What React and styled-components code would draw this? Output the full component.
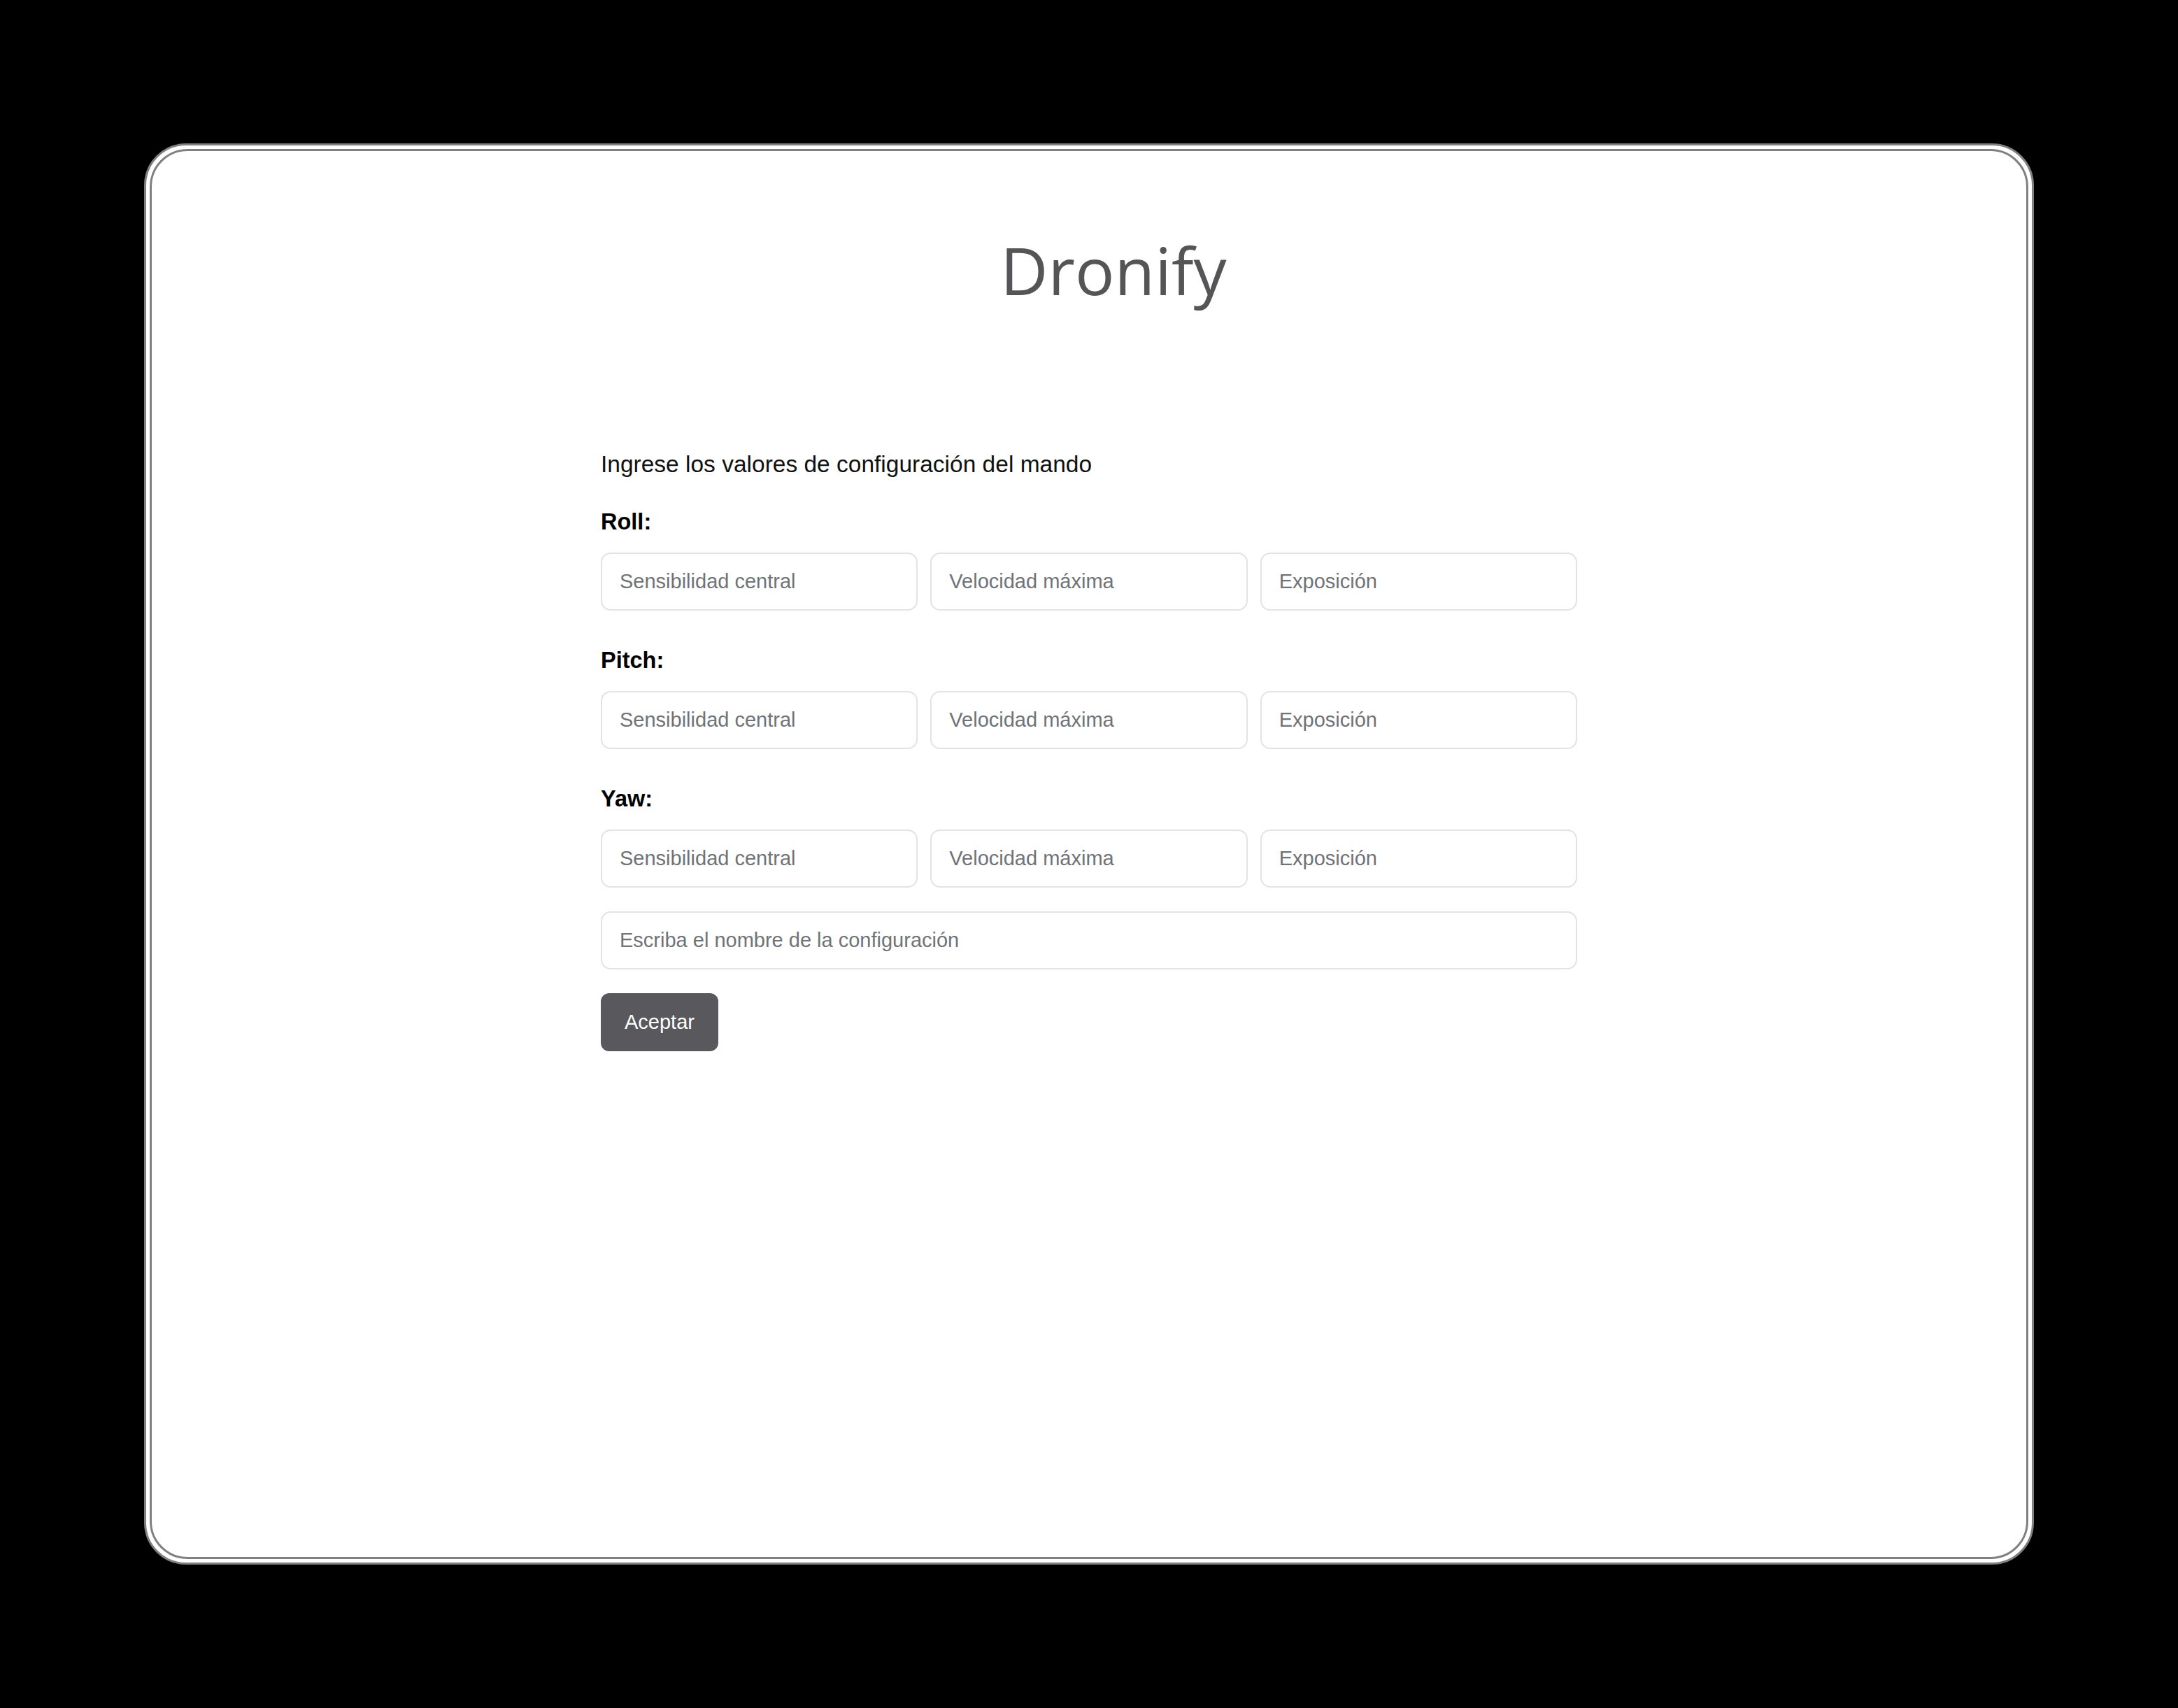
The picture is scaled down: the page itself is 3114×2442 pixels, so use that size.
import React from "react";
import styled, { createGlobalStyle } from "styled-components";

const GlobalStyle = createGlobalStyle`
    html, body {
        margin: 0;
        padding: 0;
        background-color: #000;
    }
    * {
        box-sizing: border-box;
    }
`;

const ejes = ["Roll", "Pitch", "Yaw"];
const campos = ["Sensibilidad central", "Velocidad máxima", "Exposición"];

export default function App() {
    return (
        <>
            <GlobalStyle />
            <Page>
                <Frame>
                    <Screen>
                        <Title>Dronify</Title>

                        <Form onSubmit={e => e.preventDefault()}>
                            <Intro>Ingrese los valores de configuración del mando</Intro>

                            {ejes.map(eje => (
                                <Group key={eje}>
                                    <Label>{eje}:</Label>
                                    <InputRow>
                                        {campos.map(campo => (
                                            <Input key={campo} type="text" placeholder={campo} />
                                        ))}
                                    </InputRow>
                                </Group>
                            ))}

                            <Input type="text" placeholder="Escriba el nombre de la configuración" />
                            <SubmitButton type="submit">Aceptar</SubmitButton>
                        </Form>
                    </Screen>
                </Frame>
            </Page>
        </>
    );
}

const Page = styled.div`
    width: 100%;
    min-height: 100vh;
    display: flex;
    align-items: center;
    justify-content: center;
`;

const Frame = styled.div`
    width: 2702px;
    height: 2032px;
    padding: 5px;
    border: 3px solid #808080;
    border-radius: 60px;
    background-color: #fff;
    display: flex;
`;

const Screen = styled.div`
    flex: 1;
    border: 3px solid #808080;
    border-radius: 54px;
    background-color: #fff;
    padding-top: 114px;
    display: flex;
    flex-direction: column;
    align-items: center;
`;

const Title = styled.h1`
    margin: 0;
    padding-left: 70px;
    font-family: "Open Sans", "Noto Sans", sans-serif;
    font-weight: 400;
    font-size: 94px;
    line-height: 1.2;
    color: #555558;
`;

const Form = styled.form`
    width: 1396px;
    margin-top: 201px;
    display: flex;
    flex-direction: column;
    align-items: flex-start;
    gap: 34px;
    font-family: "Liberation Sans", Arial, sans-serif;
`;

const Intro = styled.p`
    margin: 0 0 8px 0;
    font-size: 33.5px;
    line-height: 40px;
    color: #111;
`;

const Group = styled.div`
    width: 100%;
    display: flex;
    flex-direction: column;
    gap: 24px;
    margin-bottom: 17px;

    &:nth-of-type(3) {
        margin-bottom: 0;
    }
`;

const Label = styled.label`
    font-size: 32.5px;
    font-weight: 700;
    line-height: 40px;
    color: #000;
`;

const InputRow = styled.div`
    width: 100%;
    display: grid;
    grid-template-columns: repeat(3, 1fr);
    gap: 18px;
`;

const Input = styled.input`
    width: 100%;
    height: 83px;
    padding: 0 25px;
    border: 2px solid #e1e3e6;
    border-radius: 14px;
    background-color: #fff;
    font-family: "Liberation Sans", Arial, sans-serif;
    font-size: 29px;
    color: #212529;
    outline: none;

    &::placeholder {
        color: #6f7378;
    }
`;

const SubmitButton = styled.button`
    height: 83px;
    padding: 0 34px;
    border: 0;
    border-radius: 12px;
    background-color: #59585d;
    color: #fff;
    font-family: "Liberation Sans", Arial, sans-serif;
    font-size: 29px;
    cursor: pointer;
`;
